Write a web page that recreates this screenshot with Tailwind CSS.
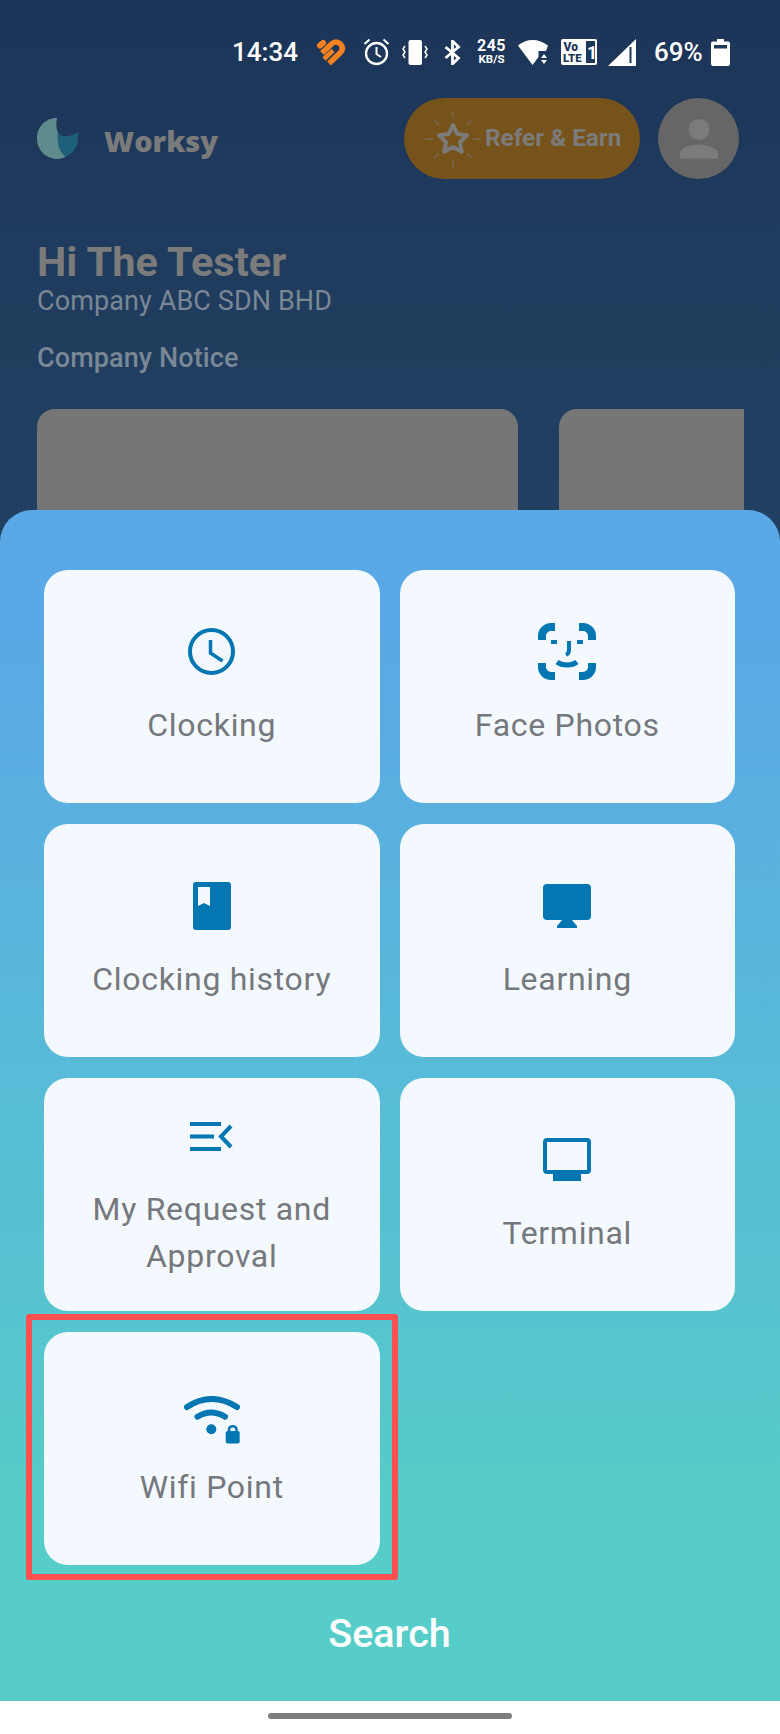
<!DOCTYPE html>
<html lang="en">
<head>
    <meta charset="UTF-8">
    <meta name="viewport" content="width=device-width, initial-scale=1.0">
    <title>Worksy</title>
    <script src="https://cdn.jsdelivr.net/npm/@tailwindcss/browser@4"></script>
</head>
<body class="bg-white font-['Roboto',sans-serif]">
<div class="relative w-[780px] h-[1734px] overflow-hidden bg-white">

    <!-- dimmed home screen -->
    <div class="h-[1701px] bg-gradient-to-b from-[#1c3558] via-[#213f60] via-25% to-[#234463] pl-[37px]">

        <!-- status bar -->
        <div class="flex items-center h-[52px] pt-[26px] box-content text-white">
            <span class="ml-[195px] w-[67px] text-[26px] font-medium leading-none whitespace-nowrap">14:34</span>
            <svg class="ml-[17px] w-[30px] h-[26px]" viewBox="0 0 30 26" fill="none" stroke="#f6821f"><path stroke-width="6" stroke-linecap="round" d="M4 6.500 L7 4"/><path stroke-width="5.500" d="M6 14 L15.500 5 Q20 1 24.500 5 Q28.500 9.500 24 14 L13 24.500"/><path stroke-width="4.500" d="M8 20 L17 11.500"/></svg>
            <svg class="ml-[17px] w-[27px] h-[28px]" viewBox="0 0 27 28" fill="none" stroke="#fff"><circle cx="13.500" cy="15.500" r="10.500" stroke-width="2.300"/><path d="M13.500 9v7l4.500 3M1.500 6l5-4.500M25.500 6l-5-4.500" stroke-width="2"/></svg>
            <svg class="ml-[12px] w-[26px] h-[25px]" viewBox="0 0 26 25"><rect x="6.500" y="0" width="13.500" height="25" rx="2" fill="#fff"/><path d="M3 6l-2 3 2 3-2 3 2 3M23 6l2 3-2 3 2 3-2 3" fill="none" stroke="#fff" stroke-width="1.500"/></svg>
            <svg class="ml-[16px] w-[17px] h-[25px]" viewBox="0 0 17 25" fill="none" stroke="#fff" stroke-width="2.800"><path d="M1.500 7l13 11-6 6V1l6 6-13 11"/></svg>
            <span class="ml-[16px] w-[29px] flex flex-col items-center font-bold leading-none"><span class="text-[16px] tracking-[0.5px]">245</span><span class="text-[11.500px]">KB/S</span></span>
            <svg class="ml-[12px] w-[32px] h-[25px]" viewBox="0 0 32 25"><path fill="#fff" d="M14.500 0C9 0 4 2 0 5.500L14.500 25l6-8V11h7.500l2-5.500C25.500 2 20 0 14.500 0Z"/><path fill="#fff" d="M26 14l-3 4h6zM23 20l3 4 3-4z"/></svg>
            <svg class="ml-[11px] w-[36px] h-[26px]" viewBox="0 0 36 26"><rect width="36" height="26" rx="2" fill="#fff"/><rect x="25" y="2" width="9" height="22" fill="#1d3759"/><text x="2.500" y="11.500" font-family="Roboto" font-weight="900" font-size="12" fill="#1d3759">Vo</text><text x="2" y="22.500" font-family="Roboto" font-weight="900" font-size="11.500" fill="#1d3759">LTE</text><text x="26" y="20" font-family="Roboto" font-weight="700" font-size="18" fill="#fff">1</text></svg>
            <svg class="ml-[11px] w-[28px] h-[27px]" viewBox="0 0 28 27"><path fill="#fff" d="M28 0v27H0Z"/><rect x="21.500" y="8" width="2" height="16" fill="#1d3759"/></svg>
            <span class="ml-[18px] text-[26px] font-medium leading-none">69%</span>
            <svg class="ml-[8px] w-[19px] h-[27px]" viewBox="0 0 19 27"><path fill="#fff" d="M6 0h7v2.500h4a2 2 0 0 1 2 2V25a2 2 0 0 1-2 2H2a2 2 0 0 1-2-2V4.500a2 2 0 0 1 2-2h4Z"/><rect x="3" y="6" width="13" height="3.500" fill="#1d3759"/></svg>
        </div>

        <!-- app header -->
        <div class="flex items-center mt-[20px] pr-[41px] h-[81px]">
            <svg class="w-[41px] h-[41px]" viewBox="0 0 41 41"><path fill="#5f8b8c" d="M20 0C8 0 0 9 0 20.500S9 41 20.500 41c3.500 0 6.500-1 8.500-2.500C23 35 20 25 21 15c-2-4-2-10-1-15Z"/><path fill="#1e6079" d="M21 15c4 4 11 5 20-1 .3 2 0 4 0 6.500 0 8-5 15-12 18C23 35 20 25 21 15Z"/></svg>
            <span class="ml-[26px] mt-[3px] text-[29px] font-extrabold leading-none text-[#7b7b7b] font-['Open_Sans',sans-serif]">Worksy</span>
            <div class="ml-auto flex items-center w-[236px] h-[81px] rounded-full bg-[#76531b] pl-[21px]">
                <svg class="w-[56px] h-[56px] shrink-0" viewBox="0 0 56 56" fill="none" stroke="#7b7b7b"><path stroke-width="4" stroke-linejoin="round" d="M28 14l4.300 9 9.700 1.300-7 6.800 1.700 9.700-8.700-4.700-8.700 4.700 1.700-9.700-7-6.800 9.700-1.300Z"/><path stroke-width="2" opacity="0.45" d="M28 0v7M28 49v7M0 28h8M48 28h8M9 9l5 5M47 9l-5 5M9 47l5-5M47 47l-5-5"/></svg>
                <span class="ml-[4px] -mt-[1px] text-[24.300px] font-bold leading-none whitespace-nowrap text-[#7b7b7b]">Refer &amp; Earn</span>
            </div>
            <div class="ml-[18px] w-[81px] h-[81px] rounded-full bg-[#666666] flex items-center justify-center">
                <svg class="w-[40px] h-[40px]" viewBox="0 0 40 40"><circle cx="20" cy="10.500" r="10.500" fill="#7b7b7b"/><path fill="#7b7b7b" d="M1 39.500v-5c0-6 12-9 19-9s19 3 19 9v5Z"/></svg>
            </div>
        </div>

        <!-- greeting -->
        <div class="mt-[60px] text-[41.500px] font-bold leading-[45px] text-[#7b7b7b]">Hi The Tester</div>
        <div class="mt-[3px] text-[27px] leading-[28px] text-[#7a8794] tracking-[0.1px]">Company ABC SDN BHD</div>
        <div class="mt-[28px] text-[27px] font-medium leading-[30px] tracking-[0.1px] text-[#7a8794]">Company Notice</div>

        <!-- notice cards -->
        <div class="mt-[36px] flex gap-[41px]">
            <div class="w-[481px] h-[200px] rounded-t-[18px] bg-[#767676]"></div>
            <div class="w-[185px] h-[200px] rounded-tl-[18px] bg-[#767676]"></div>
        </div>
    </div>

    <div class="h-[33px] flex justify-center pt-[12px]">
        <div class="w-[244px] h-[6px] rounded-full bg-[#7d7d7d]"></div>
    </div>

    <!-- bottom sheet -->
    <div class="absolute left-0 right-0 top-[510px] h-[1191px] rounded-t-[32px] bg-gradient-to-b from-[#5aa8e5] from-10% to-[#56cdc8] to-85% pl-[44px] pr-[45px] pt-[60px]">
        <div class="grid grid-cols-2 gap-x-[20px] gap-y-[21px] auto-rows-[233px]">

            <div class="flex flex-col items-center justify-center rounded-[24px] bg-[#f4f9ff] text-center">
                <div class="h-[54px] mb-[23px] flex items-center justify-center">
                    <svg class="w-[47px] h-[47px]" viewBox="0 0 47 47" fill="none" stroke="#0477b3"><circle cx="23.500" cy="23.500" r="21.500" stroke-width="4"/><path d="M22.500 12v13l12 8" stroke-width="3.500"/></svg>
                </div>
                <span class="text-[32px] leading-[47px] tracking-[0.7px] text-[#75787c]">Clocking</span>
            </div>

            <div class="flex flex-col items-center justify-center rounded-[24px] bg-[#f4f9ff] text-center">
                <div class="h-[54px] mb-[23px] flex items-center justify-center">
                    <svg class="w-[58px] h-[57px]" viewBox="0 0 58 57" fill="none" stroke="#0477b3"><path stroke-width="8" d="M4 17v-4a9 9 0 0 1 9-9h4M54 17v-4a9 9 0 0 0-9-9h-4M4 40v4a9 9 0 0 0 9 9h4M54 40v4a9 9 0 0 1-9 9h-4"/><path stroke-width="4" d="M13 19h6M39 19h6M31 18v9c0 3-1 4-3 5"/><path stroke-width="5" d="M19 39c5 4 15 4 20 0"/></svg>
                </div>
                <span class="text-[32px] leading-[47px] tracking-[0.7px] text-[#75787c]">Face Photos</span>
            </div>

            <div class="flex flex-col items-center justify-center rounded-[24px] bg-[#f4f9ff] text-center">
                <div class="h-[54px] mb-[23px] flex items-center justify-center">
                    <svg class="w-[38px] h-[48px]" viewBox="0 0 38 48"><path fill="#0477b3" fill-rule="evenodd" d="M3 0h32a3 3 0 0 1 3 3v42a3 3 0 0 1-3 3H3a3 3 0 0 1-3-3V3a3 3 0 0 1 3-3ZM5 5v19l6-3 6 3V5Z"/></svg>
                </div>
                <span class="text-[32px] leading-[47px] tracking-[0.7px] text-[#75787c]">Clocking history</span>
            </div>

            <div class="flex flex-col items-center justify-center rounded-[24px] bg-[#f4f9ff] text-center">
                <div class="h-[54px] mb-[23px] flex items-center justify-center">
                    <svg class="w-[48px] h-[44px]" viewBox="0 0 48 44"><rect width="48" height="36" rx="4" fill="#0477b3"/><path fill="#0477b3" d="M19 36h10l5 6v2H14v-2Z"/></svg>
                </div>
                <span class="text-[32px] leading-[47px] tracking-[0.7px] text-[#75787c]">Learning</span>
            </div>

            <div class="flex flex-col items-center justify-center rounded-[24px] bg-[#f4f9ff] text-center">
                <div class="h-[54px] mb-[23px] flex items-center justify-center">
                    <svg class="w-[43px] h-[29px]" viewBox="0 0 43 29" fill="none" stroke="#0477b3" stroke-width="4"><path d="M0 2h31M0 14.500h24M0 27h31M41 4L31 14.500 41 25"/></svg>
                </div>
                <span class="text-[32px] leading-[47px] tracking-[0.7px] text-[#75787c] px-[20px]">My Request and Approval</span>
            </div>

            <div class="flex flex-col items-center justify-center rounded-[24px] bg-[#f4f9ff] text-center">
                <div class="h-[54px] mb-[23px] flex items-center justify-center">
                    <svg class="w-[48px] h-[43px]" viewBox="0 0 48 43"><path fill="#0477b3" fill-rule="evenodd" d="M4 0h40a4 4 0 0 1 4 4v28a4 4 0 0 1-4 4H4a4 4 0 0 1-4-4V4a4 4 0 0 1 4-4ZM4 4v28h40V4Z"/><path fill="#0477b3" d="M10 36h28v7H10Z"/></svg>
                </div>
                <span class="text-[32px] leading-[47px] tracking-[0.7px] text-[#75787c]">Terminal</span>
            </div>

            <div class="relative flex flex-col items-center justify-center rounded-[24px] bg-[#f4f9ff] text-center">
                <div class="h-[54px] mb-[23px] flex items-center justify-center">
                    <svg class="w-[56px] h-[48px] mt-[12px]" viewBox="0 0 56 48" fill="none" stroke="#0477b3" stroke-linecap="round"><path stroke-width="6" d="M3 11Q27.500-5 53 11"/><path stroke-width="6" d="M13.500 20.700Q27 12.300 41 20.700"/><circle cx="27.300" cy="33.300" r="5" fill="#0477b3" stroke="none"/><rect x="41.700" y="35" width="14" height="12.500" rx="2" fill="#0477b3" stroke="none"/><path stroke-width="2.500" stroke-linecap="butt" d="M45 36v-2.500c0-4.500 7.500-4.500 7.500 0V36"/></svg>
                </div>
                <span class="text-[32px] leading-[47px] tracking-[0.7px] text-[#75787c]">Wifi Point</span>
                <!-- highlight round the tile -->
                <div class="absolute -left-[18px] -top-[18px] -right-[18px] -bottom-[15px] rounded-[3px] border-[6px] border-[#ff5050]"></div>
            </div>
        </div>

        <div class="mt-[44px] text-center text-[39.500px] font-medium leading-[50px] text-white">Search</div>
    </div>
</div>
</body>
</html>
